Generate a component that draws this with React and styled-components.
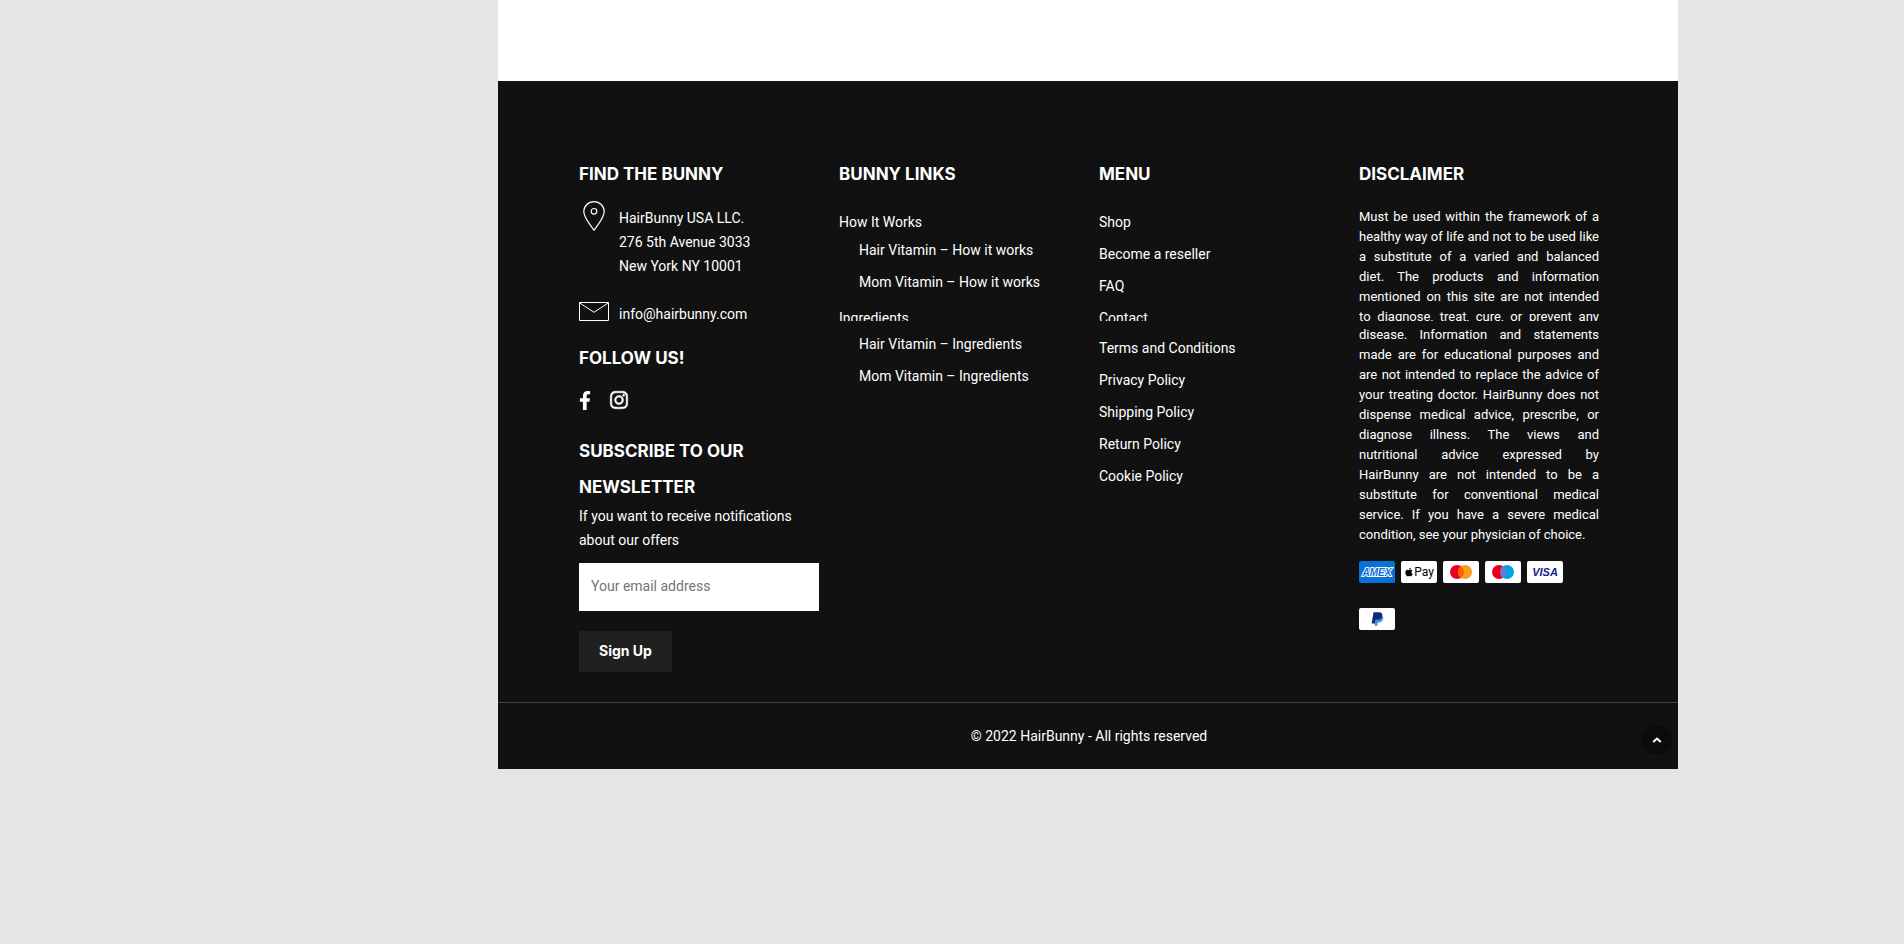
import React from "react";
import styled, { createGlobalStyle } from "styled-components";
import { FaApple, FaInstagram } from "react-icons/fa";

const menuLinks = [
  { label: "Shop" },
  { label: "Become a reseller" },
  { label: "FAQ" },
  { label: "Contact", cut: true },
  { label: "Terms and Conditions" },
  { label: "Privacy Policy" },
  { label: "Shipping Policy" },
  { label: "Return Policy" },
  { label: "Cookie Policy" },
];

const bunnyLinks = [
  {
    label: "How It Works",
    children: ["Hair Vitamin – How it works", "Mom Vitamin – How it works"],
  },
  {
    label: "Ingredients",
    cut: true,
    children: ["Hair Vitamin – Ingredients", "Mom Vitamin – Ingredients"],
  },
];

const PinIcon = () => (
  <svg width="30" height="30" viewBox="0 0 30 30" fill="none" stroke="#fff" strokeWidth="1.2">
    <path d="M15 29.3C12.5 25 4.8 17.5 4.8 10.6a10.2 10 0 0 1 20.4 0C25.2 17.5 17.5 25 15 29.3Z" />
    <circle cx="15" cy="10.3" r="2.8" />
  </svg>
);

const MailIcon = () => (
  <svg width="30" height="19" viewBox="0 0 30 19" fill="none" stroke="#fff">
    <path d="M.5 .5h29v18H.5zM.5 .8L15 10.3 29.5 .8" />
  </svg>
);

const FacebookIcon = () => (
  <svg width="12" height="19" viewBox="0 0 320 512" fill="#fff">
    <path d="M279.14 288l14.22-92.66h-88.91v-60.13c0-25.35 12.42-50.06 52.24-50.06h40.42V6.26S260.43 0 225.36 0c-73.22 0-121.08 44.38-121.08 124.72v70.62H22.89V288h81.39v224h100.17V288z" />
  </svg>
);

const Payments = () => (
  <Cards>
    <Card $bg="#0872d6" aria-label="American Express">
      <svg width="36" height="22">
        <text x="18" y="15" textAnchor="middle" fontSize="10" fontWeight="700" fontStyle="italic" fill="#0872d6" stroke="#fff" strokeWidth="2" paintOrder="stroke">
          AMEX
        </text>
      </svg>
    </Card>
    <Card aria-label="Apple Pay">
      <FaApple size={10} color="#000" />
      <PayText>Pay</PayText>
    </Card>
    <Card aria-label="Mastercard">
      <svg width="36" height="22">
        <circle cx="14" cy="11" r="7" fill="#eb001b" />
        <circle cx="22" cy="11" r="7" fill="#f79e1b" />
        <path d="M18 5.3a7 7 0 0 1 0 11.4 7 7 0 0 1 0-11.4" fill="#ff5f00" />
      </svg>
    </Card>
    <Card aria-label="Maestro">
      <svg width="36" height="22">
        <circle cx="14" cy="11" r="7" fill="#eb001b" />
        <circle cx="22" cy="11" r="7" fill="#00a2e5" />
        <path d="M18 5.3a7 7 0 0 1 0 11.4 7 7 0 0 1 0-11.4" fill="#7375cf" />
      </svg>
    </Card>
    <Card aria-label="Visa">
      <svg width="36" height="22">
        <text x="18" y="15" textAnchor="middle" fontSize="11" fontWeight="700" fontStyle="italic" fill="#171e8c">
          VISA
        </text>
      </svg>
    </Card>
    <Card aria-label="PayPal">
      <svg width="36" height="22">
        <path d="M17.2 8h6.2c.9.9 1 2 .7 3.1-.5 2.300-2 3.400-4.400 3.400h-.8l-.5 3.200h-2.900z" fill="#3f97d6" />
        <path d="M14.500 4.300h5.600c2.300 0 3.600 1.400 3.200 3.600-.5 2.600-2.400 3.900-5 3.900h-1.700l-.7 3.700h-3.200z" fill="#0f2b78" />
      </svg>
    </Card>
  </Cards>
);

const App = () => {
  return (
    <>
      <GlobalStyle />
      <Page>
        <Blank />
        <Footer>
          <Columns>
            <section>
              <Heading>FIND THE BUNNY</Heading>
              <Contact>
                <PinIcon />
                <Address>
                  HairBunny USA LLC.
                  <br />
                  276 5th Avenue 3033
                  <br />
                  New York NY 10001
                </Address>
              </Contact>
              <MailRow>
                <MailIcon />
                <Link href="#mail">info@hairbunny.com</Link>
              </MailRow>
              <Heading>FOLLOW US!</Heading>
              <Social>
                <a href="#facebook" aria-label="Facebook">
                  <FacebookIcon />
                </a>
                <a href="#instagram" aria-label="Instagram">
                  <FaInstagram size={20} strokeWidth="14" />
                </a>
              </Social>
              <Heading>SUBSCRIBE TO OUR NEWSLETTER</Heading>
              <form onSubmit={(e) => e.preventDefault()}>
                <Label htmlFor="email">
                  If you want to receive notifications about our offers
                </Label>
                <Email id="email" type="email" placeholder="Your email address" />
                <SignUp type="submit">Sign Up</SignUp>
              </form>
            </section>

            <section>
              <Heading>BUNNY LINKS</Heading>
              <List>
                {bunnyLinks.map((item) => (
                  <li key={item.label}>
                    <LinkLine $cut={item.cut}>
                      <Link href="#links">{item.label}</Link>
                    </LinkLine>
                    <SubList $cut={item.cut}>
                      {item.children.map((child) => (
                        <li key={child}>
                          <Link href="#links">{child}</Link>
                        </li>
                      ))}
                    </SubList>
                  </li>
                ))}
              </List>
            </section>

            <section>
              <Heading>MENU</Heading>
              <List>
                {menuLinks.map((item) => (
                  <MenuItem key={item.label} $cut={item.cut}>
                    <LinkLine $cut={item.cut}>
                      <Link href="#menu">{item.label}</Link>
                    </LinkLine>
                  </MenuItem>
                ))}
              </List>
            </section>

            <section>
              <Heading>DISCLAIMER</Heading>
              <Disclaimer>
                <Opening>
                  Must be used within the framework of a healthy way of life and
                  not to be used like a substitute of a varied and balanced
                  diet. The products and information mentioned on this site are
                  not intended to diagnose, treat, cure, or prevent any
                </Opening>
                <p>
                  disease. Information and statements made are for educational
                  purposes and are not intended to replace the advice of your
                  treating doctor. HairBunny does not dispense medical advice,
                  prescribe, or diagnose illness. The views and nutritional
                  advice expressed by HairBunny are not intended to be a
                  substitute for conventional medical service. If you have a
                  severe medical condition, see your physician of choice.
                </p>
              </Disclaimer>
              <Payments />
            </section>
          </Columns>
          <Copyright>
            © 2022 HairBunny - All rights reserved
            <ToTop type="button" aria-label="Back to top">
              <svg width="10" height="6" fill="none" stroke="#fff" strokeWidth="2">
                <path d="M1.2 5L5 1.5 8.8 5" />
              </svg>
            </ToTop>
          </Copyright>
        </Footer>
      </Page>
    </>
  );
};

export default App;

const GlobalStyle = createGlobalStyle`
  * {
    box-sizing: border-box;
  }
  body {
    margin: 0;
    background: #e5e5e5;
    color: #fff;
    font-family: Roboto, "Liberation Sans", sans-serif;
    font-size: 14px;
    line-height: 24px;
  }
  p, ul {
    margin: 0;
    padding: 0;
    list-style: none;
  }
  svg {
    display: block;
  }
`;

const Page = styled.main`
  margin: 0 226px 0 498px;
`;

const Blank = styled.div`
  height: 81px;
  background: #fff;
`;

const Footer = styled.footer`
  background: #111;
`;

const Columns = styled.div`
  display: grid;
  grid-template-columns: repeat(4, minmax(0, 1fr));
  column-gap: 20px;
  padding: 75px 79px 30px 81px;
`;

const Heading = styled.h2`
  margin: 0;
  font-family: Inter, "Open Sans", sans-serif;
  font-size: 17px;
  font-weight: 700;
  line-height: 36px;
`;

const Contact = styled.div`
  display: grid;
  grid-template-columns: 30px 1fr;
  column-gap: 10px;
  margin-top: 9px;
`;

const MailRow = styled(Contact)`
  height: 20px;
  margin: 24px 0 18px;
  overflow: hidden;
`;

const Address = styled.p`
  padding-top: 5px;
`;

const Link = styled.a`
  color: #fff;
  text-decoration: none;
`;

const Social = styled.div`
  display: flex;
  align-items: center;
  gap: 18px;
  height: 20px;
  margin: 14px 0 23px;
  a {
    display: flex;
    color: #fff;
  }
`;

const Label = styled.label`
  display: block;
  margin-top: -1px;
`;

const Email = styled.input`
  display: block;
  width: 100%;
  height: 48px;
  margin: 11px 0 20px;
  padding: 0 12px 2px;
  border: 0;
  border-radius: 0;
  background: #fff;
  font: inherit;
  &::placeholder {
    color: #757575;
  }
`;

const SignUp = styled.button`
  display: block;
  height: 41px;
  padding: 0 20px 2px;
  border: 0;
  background: #202020;
  color: #fff;
  font-family: Inter, "Open Sans", sans-serif;
  font-size: 14px;
  font-weight: 700;
`;

const List = styled.ul`
  margin-top: 18px;
`;

const LinkLine = styled.div`
  height: ${(p) => (p.$cut ? 15 : 24)}px;
  overflow: hidden;
`;

const SubList = styled.ul`
  display: grid;
  row-gap: 8px;
  padding: ${(p) => (p.$cut ? 11 : 4)}px 0 12px 20px;
`;

const MenuItem = styled.li`
  margin-bottom: ${(p) => (p.$cut ? 15 : 8)}px;
`;

const Disclaimer = styled.div`
  margin-top: 15px;
  font-size: 13px;
  line-height: 20px;
  text-align: justify;
`;

const Opening = styled.p`
  height: 114px;
  margin-bottom: 4px;
  overflow: hidden;
  text-align-last: justify;
`;

const Cards = styled.div`
  display: flex;
  flex-wrap: wrap;
  gap: 25px 6px;
  margin-top: 16px;
`;

const Card = styled.span`
  display: flex;
  align-items: center;
  justify-content: center;
  width: 36px;
  height: 22px;
  border-radius: 2px;
  background: ${(p) => p.$bg || "#fff"};
  font-family: "Liberation Sans", sans-serif;
`;

const PayText = styled.span`
  color: #000;
  font-family: Roboto, sans-serif;
  font-size: 12px;
  line-height: 22px;
`;

const Copyright = styled.div`
  position: relative;
  padding: 21px 0 21px 2px;
  border-top: 1px solid #444;
  text-align: center;
`;

const ToTop = styled.button`
  position: absolute;
  right: 6px;
  bottom: 14px;
  display: flex;
  align-items: center;
  justify-content: center;
  width: 30px;
  height: 30px;
  padding: 0;
  border: 0;
  border-radius: 50%;
  background: #0b0b0b;
`;
